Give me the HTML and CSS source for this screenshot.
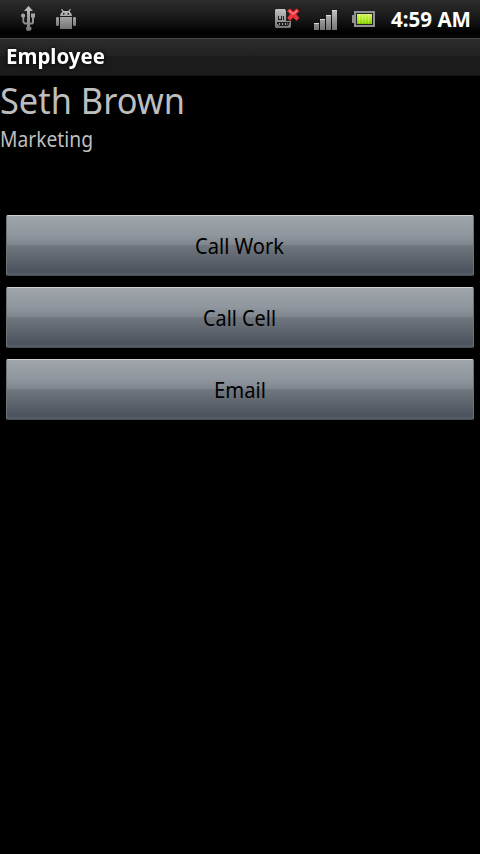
FILE: index.html
```html
<!DOCTYPE html>
<html lang="en">
<head>
<meta charset="utf-8">
<title>Employee</title>
<link rel="stylesheet" href="styles.css">
</head>
<body>
<header class="status">
  <svg class="usb" width="16" height="26" viewBox="0 0 16 26">
    <defs><linearGradient id="g" x1="0" y1="0" x2="0" y2="1"><stop offset="0" stop-color="#c2c2c2"/><stop offset="1" stop-color="#747474"/></linearGradient></defs>
    <path fill="url(#g)" d="M8.500 0L13 5H10V16.500H12V11.500H11V7.500H15V11.500H14V17L12.500 18.500H10V20.500Q11.500 21.200 11.500 22.500Q11.500 25 8.500 25Q6 25 6 22.500Q6 21.200 7 20.500V18.500H4.500L2.500 16.500V11.800Q1 11.200 1 9.500Q1 7.500 3 7.500Q5.200 7.500 5.200 9.500Q5.200 11 4.200 11.800V15.500L5.200 16.500H7V5H4Z"/>
  </svg>
  <svg class="droid" width="20" height="20" viewBox="0 0 20 20">
    <path fill="url(#g)" fill-rule="evenodd" d="M4 7Q4 4 6.500 2.500L5 .5L6 0L7.700 2H12.300L14 0L15 .5L13.500 2.500Q16 4 16 7ZM7 4V5.500H8.500V4ZM11.500 4V5.500H13V4ZM4 8H16V20H4ZM0 9Q0 8 1.500 8Q3 8 3 9V16Q3 17 1.500 17Q0 17 0 16ZM17 9Q17 8 18.500 8Q20 8 20 9V16Q20 17 18.500 17Q17 17 17 16Z"/>
  </svg>
  <svg class="sim" width="25" height="21" viewBox="0 0 25 21">
    <path fill="url(#g)" d="M1 1H10L11 3V13H16V19L15 20H1L0 19V2Z"/>
    <path fill="#202020" d="M3 8H4V11H6V8H7V12H3ZM8 8H9V12H8ZM2 14H15V15H14V17H13V18H4V17H3V16H2ZM11 3H12V13H11Z"/>
    <path fill="#a5a5a5" d="M4 15H5V17H4ZM7 15H8V17H7ZM10 15H11V17H10ZM12.500 15H13V17H12.500Z"/>
    <path fill="#f0343c" stroke="#a51a22" stroke-width=".5" d="M15 .5L18.200 3.500L21.500 .5L24.300 3L21.200 6.200L24.300 10L21.500 12.700L18.200 9.500L15 12.700L12.200 10L15.200 6.200L12.200 3Z"/>
    <path fill="none" stroke="#ff8588" stroke-width="1.300" d="M14 2.500L18.200 6L22.400 2.500"/>
  </svg>
  <svg class="signal" width="23" height="20" viewBox="0 0 23 20">
    <path fill="url(#g)" d="M0 13H5V20H0ZM6 9H11V20H6ZM12 5H17V20H12ZM18 0H23V20H18Z"/>
    <path fill="#d8d8d8" d="M0 13H5V14H0ZM6 9H11V10H6ZM12 5H17V6H12ZM18 0H23V1H18Z"/>
  </svg>
  <svg class="battery" width="23" height="16" viewBox="0 0 23 16">
    <defs><linearGradient id="b" x1="0" y1="0" x2="0" y2="1"><stop offset="0" stop-color="#d4f26b"/><stop offset=".45" stop-color="#b3ec28"/><stop offset="1" stop-color="#80c900"/></linearGradient></defs>
    <path fill="#929292" d="M2 0H23V16H2V12H0V4H2Z"/>
    <path fill="#242424" d="M4 2H21V14H4Z"/>
    <path fill="url(#b)" d="M5 3H20V13H5Z"/>
    <path stroke="#effaa8" stroke-opacity=".4" d="M7.500 3V12M10.500 3V12M13.500 3V12M16.500 3V12"/>
  </svg>
  <svg class="clock" width="82" height="38"><text x="1" y="27" textLength="80" lengthAdjust="spacingAndGlyphs">4:59 AM</text></svg>
</header>
<div class="title"><svg width="120" height="36"><text x="6" y="25" textLength="99" lengthAdjust="spacingAndGlyphs">Employee</text></svg></div>
<main>
  <svg class="name" width="240" height="50"><text x="0" y="38" textLength="185" lengthAdjust="spacingAndGlyphs">Seth Brown</text></svg>
  <svg class="dept" width="240" height="30"><text x="0" y="21" textLength="93" lengthAdjust="spacingAndGlyphs">Marketing</text></svg>
  <div class="actions">
    <button><svg width="110" height="59"><text x="10" y="38" textLength="89" lengthAdjust="spacingAndGlyphs">Call Work</text></svg></button>
    <button><svg width="94" height="59"><text x="10" y="38" textLength="73" lengthAdjust="spacingAndGlyphs">Call Cell</text></svg></button>
    <button><svg width="74" height="59"><text x="11" y="38" textLength="52" lengthAdjust="spacingAndGlyphs">Email</text></svg></button>
  </div>
</main>
</body>
</html>
```
FILE: styles.css
```css
* { box-sizing: border-box; }
body {
  margin: 0;
  min-height: 854px;
  background: #000;
  font-family: "Noto Sans", "Open Sans", sans-serif;
}
svg { display: block; flex: none; overflow: visible; }
.status {
  display: flex;
  align-items: flex-start;
  height: 38px;
  padding-left: 20px;
  background: linear-gradient(#2d2d2d, #171717 50%, #000 86%, #080808);
}
.usb { margin-top: 6px; }
.droid { margin: 9px 0 0 20px; }
.sim { margin: 8px 0 0 199px; }
.signal { margin: 10px 0 0 14px; }
.battery { margin: 11px 0 0 15px; }
.clock { margin-left: 15px; fill: #fff; font-size: 21px; font-weight: 700; }
.title {
  height: 38px;
  border-top: 1px solid #484848;
  background: linear-gradient(#2c2c2c, #222 17px, #1b1b1b 17px, #1b1b1b);
  fill: #fff;
  font-size: 21.5px;
  font-weight: 700;
  border-bottom: 1px solid #151515;
}
.title text { filter: drop-shadow(0 0 2px #000); }
.name { fill: #bebebe; font-size: 36.5px; }
.dept { fill: #bebebe; font-size: 22.5px; }
.actions {
  display: flex;
  flex-direction: column;
  gap: 11px;
  margin-top: 59px;
  padding: 0 6px;
}
button {
  display: flex;
  justify-content: center;
  height: 61px;
  padding: 0;
  border: 1px solid;
  border-color: #d0d3d6 #6c737a #454d55 #6c737a;
  border-radius: 2px;
  background: linear-gradient(#9fa5ab, #90979e 18px, #7f868d 29px, #717880 29px, #4b525b 56px, #58606a);
  font: 22.5px "Noto Sans", "Open Sans", sans-serif;
  fill: #000;
}
```
